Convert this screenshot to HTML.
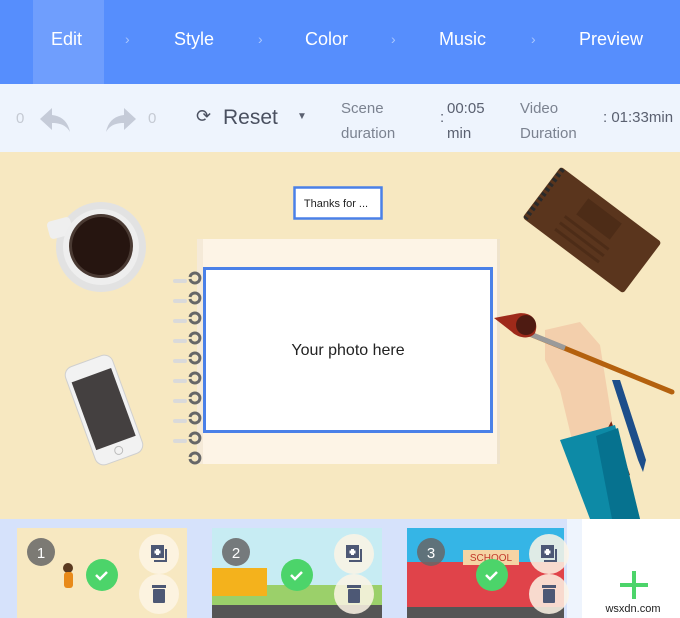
<!DOCTYPE html>
<html><head><meta charset="utf-8"><style>
*{margin:0;padding:0;box-sizing:border-box}
body{width:680px;height:618px;overflow:hidden;font-family:"Liberation Sans",sans-serif;background:#f7e8c1;position:relative}
.hdr{position:absolute;left:0;top:0;width:680px;height:84px;background:#568efd;color:#fff;font-size:18px}
.hdr span{position:absolute;top:29px}
.hl{position:absolute;left:33px;top:0;width:71px;height:84px;background:#6f9efd}
.ch{color:#a9c6fe;font-size:14px}
.tb{position:absolute;left:0;top:84px;width:680px;height:68px;background:#eef4fd;color:#7b8290}
.tb span{position:absolute}
</style></head><body>
<div class="hdr"><div class="hl"></div>
<span style="left:51px">Edit</span><span class="ch" style="left:125px;top:31px">›</span>
<span style="left:174px">Style</span><span class="ch" style="left:258px;top:31px">›</span>
<span style="left:305px">Color</span><span class="ch" style="left:391px;top:31px">›</span>
<span style="left:439px">Music</span><span class="ch" style="left:531px;top:31px">›</span>
<span style="left:579px">Preview</span></div>
<div class="tb">
<span style="left:16px;top:26px;color:#c5cad3;font-size:15px">0</span>
<svg style="position:absolute;left:38px;top:22px" width="34" height="28" viewBox="0 0 34 28"><path d="M14 2 L2 13 L14 24 V17 C22 17 28 19 32 26 C30 16 24 10 14 9 Z" fill="#c5cbd8"/></svg>
<svg style="position:absolute;left:104px;top:22px" width="34" height="28" viewBox="0 0 34 28"><path d="M20 2 L32 13 L20 24 V17 C12 17 6 19 2 26 C4 16 10 10 20 9 Z" fill="#c5cbd8"/></svg>
<span style="left:148px;top:26px;color:#c5cad3;font-size:15px">0</span>
<span style="left:196px;top:22px;color:#4a5060;font-size:18px">⟳</span>
<span style="left:223px;top:22px;color:#4a5060;font-size:21px">Reset</span>
<span style="left:297px;top:27px;font-size:10px;color:#5a6070">▼</span>
<span style="left:341px;top:12px;font-size:15px;line-height:25px">Scene<br>duration</span>
<span style="left:440px;top:25px;font-size:15px;color:#5a6070">:</span>
<span style="left:447px;top:12px;font-size:15px;line-height:25px;color:#5a6070">00:05<br>min</span>
<span style="left:520px;top:12px;font-size:15px;line-height:25px">Video<br>Duration</span>
<span style="left:603px;top:25px;font-size:15px;color:#5a6070">: 01:33min</span>
</div>
<svg style="position:absolute;left:0;top:152px" width="680" height="466" viewBox="0 152 680 466">
<rect x="0" y="152" width="680" height="367" fill="#f7e8c1"/>
<circle cx="101" cy="247" r="45" fill="#e2e2e2"/>
<rect x="48" y="219" width="24" height="18" rx="4" fill="#efefef" transform="rotate(-15 60 228)"/>
<circle cx="101" cy="247" r="38" fill="#eeeeee"/>
<circle cx="101" cy="246" r="32" fill="#4a3a33"/>
<circle cx="101" cy="246" r="29" fill="#261510"/>
<g transform="rotate(-20 104 410)"><rect x="79" y="358" width="50" height="104" rx="9" fill="#f2f2f2" stroke="#cfcfcf"/><rect x="83" y="373" width="42" height="72" fill="#444040"/><circle cx="104" cy="453" r="4" fill="none" stroke="#bbb"/></g>
<rect x="197" y="239" width="303" height="225" fill="#fdf4e6"/>
<rect x="197" y="239" width="6" height="225" fill="#f5ead8"/>
<rect x="497" y="239" width="3" height="225" fill="#efe3cc"/>
<g fill="none" stroke="#676767" stroke-width="3">
<path d="M190 277 a5 5 0 1 1 0 2"/><path d="M190 297 a5 5 0 1 1 0 2"/><path d="M190 317 a5 5 0 1 1 0 2"/><path d="M190 337 a5 5 0 1 1 0 2"/><path d="M190 357 a5 5 0 1 1 0 2"/><path d="M190 377 a5 5 0 1 1 0 2"/><path d="M190 397 a5 5 0 1 1 0 2"/><path d="M190 417 a5 5 0 1 1 0 2"/><path d="M190 437 a5 5 0 1 1 0 2"/><path d="M190 457 a5 5 0 1 1 0 2"/>
</g>
<g fill="#dadada"><rect x="173" y="279" width="14" height="4" rx="2"/><rect x="173" y="299" width="14" height="4" rx="2"/><rect x="173" y="319" width="14" height="4" rx="2"/><rect x="173" y="339" width="14" height="4" rx="2"/><rect x="173" y="359" width="14" height="4" rx="2"/><rect x="173" y="379" width="14" height="4" rx="2"/><rect x="173" y="399" width="14" height="4" rx="2"/><rect x="173" y="419" width="14" height="4" rx="2"/><rect x="173" y="439" width="14" height="4" rx="2"/></g>
<rect x="204.5" y="268.5" width="287" height="163" fill="#fff" stroke="#4a80e8" stroke-width="3"/>
<text x="348" y="355" text-anchor="middle" font-size="16" fill="#222">Your photo here</text>
<rect x="294.5" y="187.5" width="87" height="31" fill="#fff" stroke="#4a80e8" stroke-width="2.5"/>
<text x="336" y="207" text-anchor="middle" font-size="11" fill="#222">Thanks for ...</text>
<g transform="rotate(37 592 230)"><rect x="529" y="198" width="126" height="64" rx="3" fill="#5a351d"/><rect x="570" y="207" width="42" height="20" fill="#4d2c17"/><rect x="562" y="234" width="55" height="3" fill="#4d2c17"/><rect x="562" y="242" width="55" height="3" fill="#4d2c17"/><rect x="562" y="250" width="55" height="3" fill="#4d2c17"/><line x1="532" y1="199" x2="532" y2="261" stroke="#2a2a2a" stroke-width="5" stroke-dasharray="3 3"/></g>
<path d="M612 380 L638 460 L643 472 L646 460 L620 380Z" fill="#1d4e8a"/>
<path d="M604 400 L630 475 L624 478 L598 402Z" fill="#7a2a18"/>
<path d="M545 330 L580 322 L600 345 L612 420 L596 450 L572 440 L560 390 L545 360Z" fill="#f3cfac"/>
<path d="M560 440 L615 425 L640 519 L590 519 Z" fill="#0d8aa6"/>
<path d="M596 436 L618 428 L640 519 L612 519 Z" fill="#06728f"/>
<line x1="520" y1="330" x2="672" y2="392" stroke="#b4610e" stroke-width="5" stroke-linecap="round"/>
<line x1="520" y1="330" x2="565" y2="348" stroke="#9a9a9a" stroke-width="5"/>
<path d="M494 318 L515 314 C530 310 540 320 535 333 C530 340 518 338 512 332Z" fill="#9e2a1a"/>
<circle cx="526" cy="325" r="10" fill="#3a1810" opacity=".8"/>
<rect x="0" y="519" width="582" height="99" fill="#d6e2fb"/>
<rect x="567" y="519" width="15" height="99" fill="#eef4fd"/>
<rect x="582" y="519" width="98" height="99" fill="#fff"/>
<rect x="17" y="528" width="170" height="90" fill="#f7e8c1"/>
<rect x="212" y="528" width="170" height="90" fill="#c7ecf3"/>
<rect x="212" y="585" width="170" height="33" fill="#9bd06a"/>
<rect x="212" y="568" width="55" height="28" fill="#f4b21c"/>
<rect x="212" y="605" width="170" height="13" fill="#555"/>
<rect x="407" y="528" width="157" height="90" fill="#35b5e6"/>
<rect x="407" y="562" width="157" height="45" fill="#e0434a"/>
<rect x="463" y="550" width="56" height="15" fill="#f5d4a4"/>
<text x="491" y="561" text-anchor="middle" font-size="10" fill="#c0392b">SCHOOL</text>
<rect x="407" y="607" width="157" height="11" fill="#555"/>
<circle cx="68" cy="568" r="5" fill="#5a3a20"/><rect x="64" y="572" width="9" height="16" rx="3" fill="#e88a1a"/>
<g fill="#666" opacity=".85"><circle cx="41" cy="552" r="14"/><circle cx="236" cy="552" r="14"/><circle cx="431" cy="552" r="14"/></g>
<g fill="#fff" font-size="15" text-anchor="middle"><text x="41" y="558">1</text><text x="236" y="558">2</text><text x="431" y="558">3</text></g>
<g fill="#4cd46a"><circle cx="102" cy="575" r="16"/><circle cx="297" cy="575" r="16"/><circle cx="492" cy="575" r="16"/></g>
<g fill="none" stroke="#fff" stroke-width="2.5"><path d="M96 575 l4 4 l7 -7"/><path d="M291 575 l4 4 l7 -7"/><path d="M486 575 l4 4 l7 -7"/></g>
<g fill="#fdf5e6" opacity=".85"><circle cx="159" cy="554" r="20"/><circle cx="159" cy="594" r="20"/><circle cx="354" cy="554" r="20"/><circle cx="354" cy="594" r="20"/><circle cx="549" cy="554" r="20"/><circle cx="549" cy="594" r="20"/></g>
<g fill="#4d5875">
<rect x="151" y="545" width="13" height="13"/><path d="M167 549 v13 h-13 v-2 h11 v-11z"/>
<rect x="346" y="545" width="13" height="13"/><path d="M362 549 v13 h-13 v-2 h11 v-11z"/>
<rect x="541" y="545" width="13" height="13"/><path d="M557 549 v13 h-13 v-2 h11 v-11z"/>
<rect x="152" y="585" width="14" height="3"/><rect x="153" y="589" width="12" height="14" rx="1"/>
<rect x="347" y="585" width="14" height="3"/><rect x="348" y="589" width="12" height="14" rx="1"/>
<rect x="542" y="585" width="14" height="3"/><rect x="543" y="589" width="12" height="14" rx="1"/>
</g>
<g fill="#fff"><rect x="156" y="549" width="3" height="6"/><rect x="154.5" y="550.5" width="6" height="3"/><rect x="351" y="549" width="3" height="6"/><rect x="349.5" y="550.5" width="6" height="3"/><rect x="546" y="549" width="3" height="6"/><rect x="544.5" y="550.5" width="6" height="3"/></g>
<rect x="632" y="571" width="4" height="28" fill="#4cd46a"/><rect x="620" y="583" width="28" height="4" fill="#4cd46a"/>
<text x="633" y="612" text-anchor="middle" font-size="11" fill="#222">wsxdn.com</text>
</svg>
</body></html>
